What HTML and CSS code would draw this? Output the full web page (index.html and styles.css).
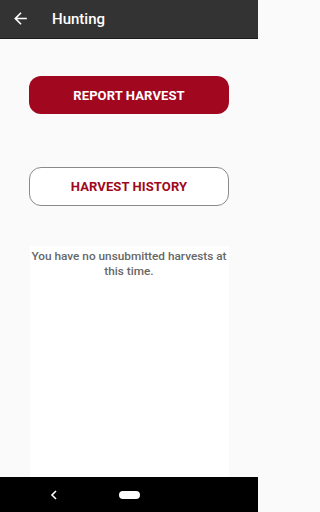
FILE: index.html
```html
<!DOCTYPE html>
<html>
<head>
<meta charset="utf-8">
<link rel="stylesheet" href="styles.css">
</head>
<body>
<div class="screen">
  <header class="appbar">
    <svg class="back" viewBox="0 0 24 24" width="19" height="19"><path fill="#fff" d="M20 11H7.83l5.59-5.59L12 4l-8 8 8 8 1.41-1.41L7.83 13H20v-2z"/></svg>
    <span class="title">Hunting</span>
  </header>
  <main class="content">
    <button class="btn btn-primary">REPORT HARVEST</button>
    <button class="btn btn-outline">HARVEST HISTORY</button>
    <div class="panel">
      <p class="empty">You have no unsubmitted harvests at this time.</p>
    </div>
  </main>
  <nav class="navbar">
    <svg class="nav-back" viewBox="0 0 10 12" width="10" height="12"><path d="M7 2 L3 6 L7 10" fill="none" stroke="#fff" stroke-width="1.6"/></svg>
    <span class="home-pill"></span>
  </nav>
</div>
</body>
</html>
```
FILE: styles.css
```css
html, body {
  margin: 0;
  padding: 0;
  background: #fafafa;
}
body {
  font-family: Roboto, "Liberation Sans", sans-serif;
}
.screen {
  width: 258px;
  height: 512px;
  display: flex;
  flex-direction: column;
}
.appbar {
  height: 38px;
  background: #333333;
  border-bottom: 1px solid #1a1a1a;
  display: flex;
  align-items: center;
  flex-shrink: 0;
}
.back {
  margin-left: 11px;
  margin-top: -1px;
}
.title {
  margin-left: 22px;
  color: #fff;
  font-weight: 500;
  font-size: 15px;
  margin-top: -1px;
}
.content {
  flex: 1;
  display: flex;
  flex-direction: column;
  align-items: center;
  padding-top: 37px;
}
.btn {
  width: 200px;
  height: 38px;
  border-radius: 12px;
  font-family: Roboto, "Liberation Sans", sans-serif;
  font-weight: 700;
  font-size: 13px;
  letter-spacing: 0.1px;
  display: flex;
  align-items: center;
  justify-content: center;
  padding: 0;
}
.btn-primary {
  background: #a10820;
  color: #fff;
  border: none;
}
.btn-outline {
  margin-top: 53px;
  height: 39px;
  background: #fff;
  color: #a10820;
  border: 1px solid #8a8a8a;
}
.panel {
  margin-top: 40px;
  width: 199px;
  flex: 1;
  background: #ffffff;
  display: flex;
  flex-direction: column;
  align-items: center;
}
.empty {
  margin: 3px 0 0;
  width: 210px;
  text-align: center;
  font-size: 11.8px;
  line-height: 15px;
  font-weight: 500;
  color: #676767;
}
.navbar {
  height: 35px;
  background: #000;
  flex-shrink: 0;
  position: relative;
}
.nav-back {
  position: absolute;
  left: 49px;
  top: 12px;
}
.home-pill {
  position: absolute;
  left: 119px;
  top: 14px;
  width: 21px;
  height: 8px;
  border-radius: 4px;
  background: #fff;
}
```
